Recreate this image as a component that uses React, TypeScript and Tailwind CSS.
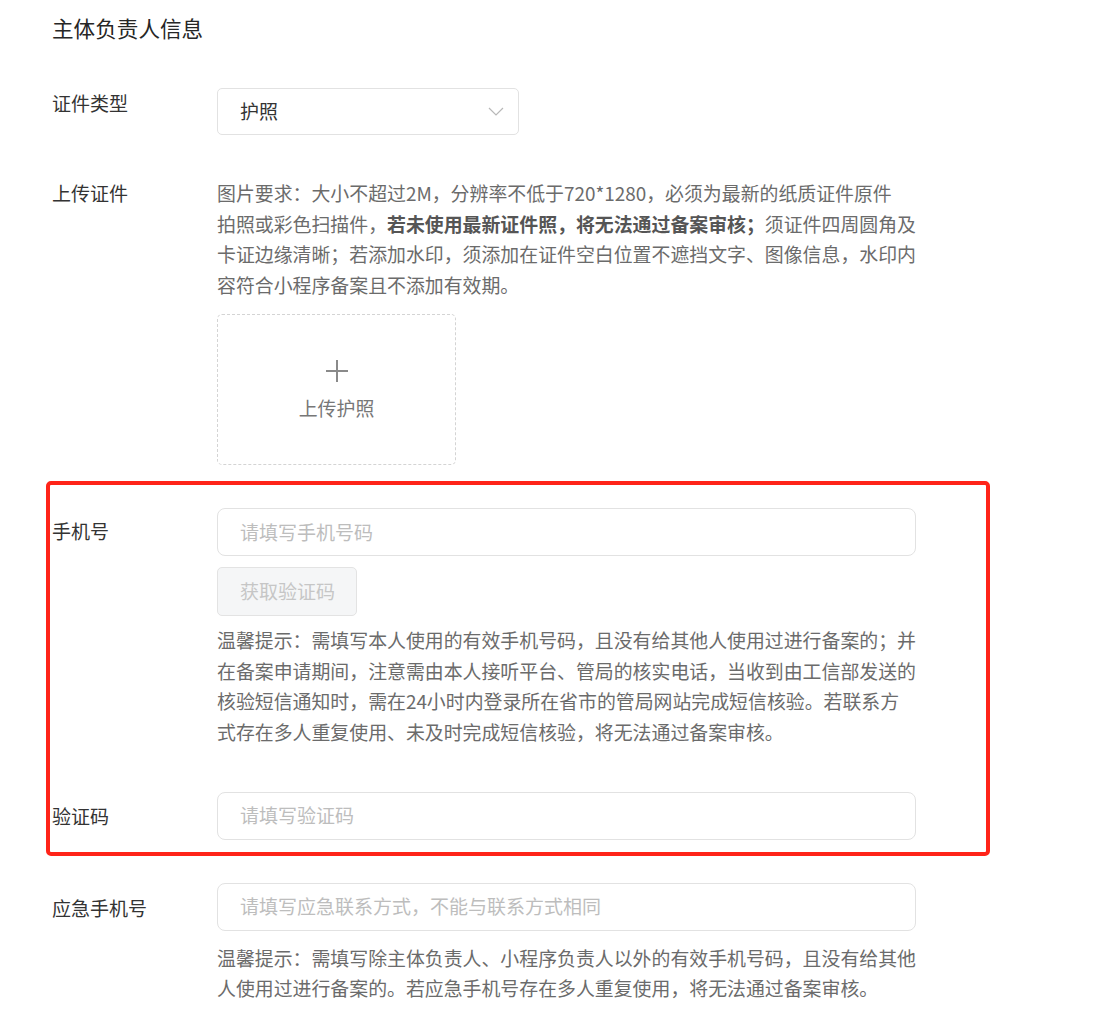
import type { ReactNode } from 'react';

const font = { fontFamily: '"Noto Sans CJK SC", "Noto Sans", sans-serif' };

function Row({ label, labelOffset = 'pt-0', children }: { label: string; labelOffset?: string; children: ReactNode }) {
  return (
    <div className="flex">
      <div className={`w-[165px] shrink-0 text-[19px] leading-[30px] text-[#333] ${labelOffset}`}>{label}</div>
      <div className="flex-1">{children}</div>
    </div>
  );
}

function Hint({ lines }: { lines: ReactNode[] }) {
  return (
    <div className="text-[18.9px] leading-[30.7px] text-[#6b6b6b]">
      {lines.map((line, i) => (
        <div key={i} className="whitespace-nowrap">
          {line}
        </div>
      ))}
    </div>
  );
}

function TextInput({ placeholder }: { placeholder: string }) {
  return (
    <div className="w-[699px] h-[48px] border border-[#e2e2e2] rounded-[8px] flex items-center pl-[22px] text-[19px] text-[#bdbdbd]">
      {placeholder}
    </div>
  );
}

export default function App() {
  return (
    <div className="bg-white min-h-[1029px] pl-[52px] pt-[13px]" style={font}>
      <div className="text-[21.6px] leading-[30px] text-[#262626]">主体负责人信息</div>

      <div className="mt-[45px]">
        <Row label="证件类型">
          <div className="w-[302px] h-[47px] border border-[#e2e2e2] rounded-[5px] flex items-center justify-between pl-[22px] pr-[14px] text-[19px] text-[#333]">
            <span>护照</span>
            <svg width="16" height="9" viewBox="0 0 16 9" fill="none">
              <polyline points="1,1 8,8 15,1" stroke="#b8b8b8" strokeWidth="1.2" />
            </svg>
          </div>
        </Row>
      </div>

      <div className="mt-[43px]">
        <Row label="上传证件">
          <Hint
            lines={[
              '图片要求：大小不超过2M，分辨率不低于720*1280，必须为最新的纸质证件原件',
              <>
                拍照或彩色扫描件，<span className="font-bold text-[#555]">若未使用最新证件照，将无法通过备案审核；</span>须证件四周圆角及
              </>,
              '卡证边缘清晰；若添加水印，须添加在证件空白位置不遮挡文字、图像信息，水印内',
              '容符合小程序备案且不添加有效期。',
            ]}
          />
          <div className="mt-[13px] w-[239px] h-[151px] border border-dashed border-[#d4d4d4] rounded-[5px] flex flex-col items-center justify-center">
            <svg width="24" height="24" viewBox="0 0 24 24" className="mt-[2px]">
              <line x1="12" y1="1" x2="12" y2="23" stroke="#8a8a8a" strokeWidth="2" />
              <line x1="1" y1="12" x2="23" y2="12" stroke="#8a8a8a" strokeWidth="2" />
            </svg>
            <div className="mt-[12px] text-[18.9px] leading-[26px] text-[#777]">上传护照</div>
          </div>
        </Row>
      </div>

      <div className="mt-[16px] -ml-[6px] w-[944px] border-4 border-[#ff2419] rounded-[5px] pl-[2px] pt-[23px] pb-[12px]">
        <Row label="手机号" labelOffset="pt-[8px]">
          <TextInput placeholder="请填写手机号码" />
          <div className="mt-[11px] w-[140px] h-[49px] bg-[#f5f6f7] border border-[#e3e3e3] rounded-[5px] flex items-center pl-[22px] text-[19px] text-[#c6c6c6]">
            获取验证码
          </div>
          <div className="mt-[9px]">
            <Hint
              lines={[
                '温馨提示：需填写本人使用的有效手机号码，且没有给其他人使用过进行备案的；并',
                '在备案申请期间，注意需由本人接听平台、管局的核实电话，当收到由工信部发送的',
                '核验短信通知时，需在24小时内登录所在省市的管局网站完成短信核验。若联系方',
                '式存在多人重复使用、未及时完成短信核验，将无法通过备案审核。',
              ]}
            />
          </div>
        </Row>
        <div className="mt-[44px]">
          <Row label="验证码" labelOffset="pt-[9px]">
            <TextInput placeholder="请填写验证码" />
          </Row>
        </div>
      </div>

      <div className="mt-[27px]">
        <Row label="应急手机号" labelOffset="pt-[10px]">
          <TextInput placeholder="请填写应急联系方式，不能与联系方式相同" />
          <div className="mt-[12px]">
            <Hint
              lines={[
                '温馨提示：需填写除主体负责人、小程序负责人以外的有效手机号码，且没有给其他',
                '人使用过进行备案的。若应急手机号存在多人重复使用，将无法通过备案审核。',
              ]}
            />
          </div>
        </Row>
      </div>
    </div>
  );
}
